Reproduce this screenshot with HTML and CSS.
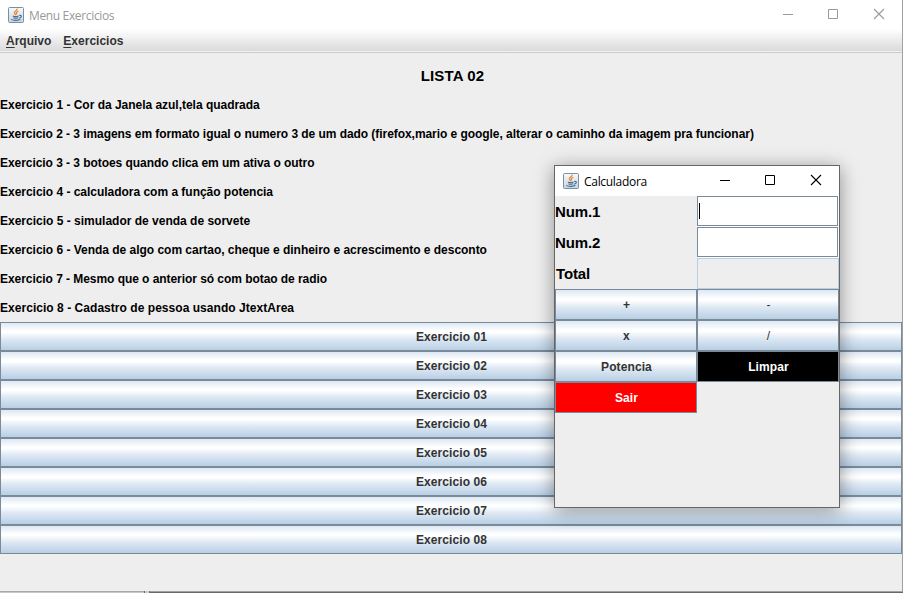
FILE: index.html
```
<!DOCTYPE html>
<html lang="pt-BR">
<head>
<meta charset="utf-8">
<title>Menu Exercicios</title>
<link rel="stylesheet" href="styles.css">
</head>
<body>
<svg class="defs" width="0" height="0" aria-hidden="true">
  <defs>
    <linearGradient id="jbg" x1="0" y1="0" x2="0" y2="1"><stop offset="0" stop-color="#f8f9fa"/><stop offset="1" stop-color="#c9d4dd"/></linearGradient>
    <symbol id="java" viewBox="0 0 16 16">
      <rect x=".5" y=".5" width="15" height="15" rx="1" fill="url(#jbg)" stroke="#7590a8"/>
      <path d="M9.2 1.7C9.7 3.8 5.4 4.4 6.4 6.2L7.8 8.2M10.4 4.3C8 5.2 8 6 8.9 7.4" fill="none" stroke="#ee8124" stroke-width="1.2"/>
      <path d="M4.8 8.9C6 9.7 9 9.6 10.6 9M5.4 10.7C7 11.4 9 11.3 10.3 10.8M3.2 12.4C5.5 13.8 10.5 13.6 12.3 12.3M11.2 8.5C14.2 7.8 13.9 10.6 11.4 11.1" fill="none" stroke="#3f6c91" stroke-width="1.1"/>
    </symbol>
    <symbol id="min" viewBox="0 0 12 12"><path d="M1 6.5h10" stroke="currentColor"/></symbol>
    <symbol id="max" viewBox="0 0 12 12"><path d="M1.5 1.5h9v9h-9z" fill="none" stroke="currentColor"/></symbol>
    <symbol id="close" viewBox="0 0 12 12"><path d="M1 1l10 10M11 1L1 11" fill="none" stroke="currentColor" stroke-width="1.1"/></symbol>
  </defs>
</svg>
<div class="window">
  <header class="titlebar">
    <svg class="java"><use href="#java"/></svg>
    <span class="caption">Menu Exercicios</span>
    <span class="controls"><svg class="minimize"><use href="#min"/></svg><svg><use href="#max"/></svg><svg><use href="#close"/></svg></span>
  </header>
  <nav class="menubar"><span><u>A</u>rquivo</span><span><u>E</u>xercicios</span></nav>
  <main class="list">
    <h1>LISTA 02</h1>
    <p>Exercicio 1 - Cor da Janela azul,tela quadrada</p>
    <p class="tight">Exercicio 2 - 3 imagens em formato igual o numero 3 de um dado (firefox,mario e google, alterar o caminho da imagem pra funcionar)</p>
    <p class="tight">Exercicio 3 - 3 botoes quando clica em um ativa o outro</p>
    <p>Exercicio 4 - calculadora com a função potencia</p>
    <p class="even">Exercicio 5 - simulador de venda de sorvete</p>
    <p>Exercicio 6 - Venda de algo com cartao, cheque e dinheiro e acrescimento e desconto</p>
    <p class="tight">Exercicio 7 - Mesmo que o anterior só com botao de radio</p>
    <p class="loose">Exercicio 8 - Cadastro de pessoa usando JtextArea</p>
    <button class="metal">Exercicio 01</button>
    <button class="metal">Exercicio 02</button>
    <button class="metal">Exercicio 03</button>
    <button class="metal">Exercicio 04</button>
    <button class="metal">Exercicio 05</button>
    <button class="metal">Exercicio 06</button>
    <button class="metal">Exercicio 07</button>
    <button class="metal">Exercicio 08</button>
  </main>
</div>
<div class="bottom-edge"><i class="soft"></i><i class="notch"></i><i class="hard"></i></div>
<section class="dialog">
  <header class="titlebar">
    <svg class="java"><use href="#java"/></svg>
    <span class="caption">Calculadora</span>
    <span class="controls"><svg class="minimize"><use href="#min"/></svg><svg><use href="#max"/></svg><svg><use href="#close"/></svg></span>
  </header>
  <div class="calc">
    <label>Num.1</label><div class="cell"><div class="field"><i class="caret"></i></div></div>
    <label>Num.2</label><div class="cell"><div class="field"></div></div>
    <label class="total">Total</label><div class="result"></div>
    <button class="metal">+</button><button class="metal plain">-</button>
    <button class="metal">x</button><button class="metal plain">/</button>
    <button class="metal">Potencia</button><button class="metal clear">Limpar</button>
    <button class="metal exit">Sair</button>
  </div>
</section>
</body>
</html>
```
FILE: styles.css
```
* { box-sizing: border-box; }
body {
  margin: 0;
  width: 903px;
  height: 593px;
  overflow: hidden;
  position: relative;
  background: #eee;
  color: #000;
  font: bold 12px "Liberation Sans", Arial, sans-serif;
}
.defs { position: absolute; }
.window { height: 591px; border-right: 1px solid #a0a0a0; background: #eee; }
.titlebar {
  display: flex;
  align-items: center;
  height: 29px;
  padding: 0 17px 0 8px;
  background: #fff;
  color: #999;
  font: 12px "Open Sans", "Noto Sans", sans-serif;
}
.java { width: 16px; height: 16px; margin-right: 5px; }
.caption { letter-spacing: -.35px; padding-top: 1px; }
.dialog .caption { letter-spacing: -.3px; padding-top: 0; }
.controls { display: flex; gap: 34px; margin-left: auto; align-self: flex-start; padding-top: 8px; }
.controls svg { width: 12px; height: 12px; display: block; }
.controls .minimize { margin-right: -1px; }
.menubar {
  display: flex;
  gap: 12px;
  height: 24px;
  padding: 5px 6px 0;
  line-height: 14px;
  color: #333;
  letter-spacing: 0;
  background: linear-gradient(#fff, #dadada 22px, #f0f0f0 22px, #f0f0f0 23px, #ccc 23px);
}
.menubar u { text-underline-offset: 2px; text-decoration-thickness: 1px; }
.list { display: grid; grid-auto-rows: 29px; padding-top: 8px; }
.list h1 {
  margin: 0;
  padding-left: 3px;
  font-size: 15px;
  line-height: 30px;
  letter-spacing: .1px;
  text-align: center;
}
.list p { margin: 0; line-height: 31px; white-space: nowrap; letter-spacing: -.023px; }
.list .tight { letter-spacing: -.054px; }
.list .even { letter-spacing: 0; }
.list .loose { letter-spacing: .04px; }
.metal {
  margin: 0;
  padding: 0 0 0 1px;
  border: 1px solid #7a8a99;
  background: linear-gradient(#dde8f3, #fff 30%, #fff 35%, #dde8f3 60%, #b8cfe5);
  color: #333;
  font: inherit;
  letter-spacing: .1px;
}
.bottom-edge { display: flex; height: 2px; }
.bottom-edge .soft { width: 144px; background: linear-gradient(#a8a8a8 50%, #c8c8c8 50%); }
.bottom-edge .notch { width: 6px; border-left: 1px solid #666; border-right: 1px solid #777; background: #ccc; }
.bottom-edge .hard { flex: 1; background: linear-gradient(#a0a0a0 50%, #68686c 50%); }
.dialog {
  position: absolute;
  left: 554px;
  top: 165px;
  width: 286px;
  height: 343px;
  border: 1px solid #666;
  background: #eee;
  box-shadow: 0 3px 18px rgba(0, 0, 0, .4);
}
.dialog .titlebar { height: 30px; color: #000; }
.calc { display: grid; grid-template-columns: 142px 142px; grid-auto-rows: 31px; }
.calc label { font-size: 15px; line-height: 32px; letter-spacing: -.15px; }
.calc .total { padding-left: 1px; }
.cell { background: #fff; padding: 0 1px 1px 0; }
.field { height: 30px; border: 1px solid #7a8a99; padding: 6px 1px; }
.caret { display: block; width: 1px; height: 16px; background: #000; }
.result { border: 1px solid #b8cfe5; }
.plain { font-weight: normal; }
.clear { background: #000; color: #fff; }
.exit { background: red; color: #fff; }
```
